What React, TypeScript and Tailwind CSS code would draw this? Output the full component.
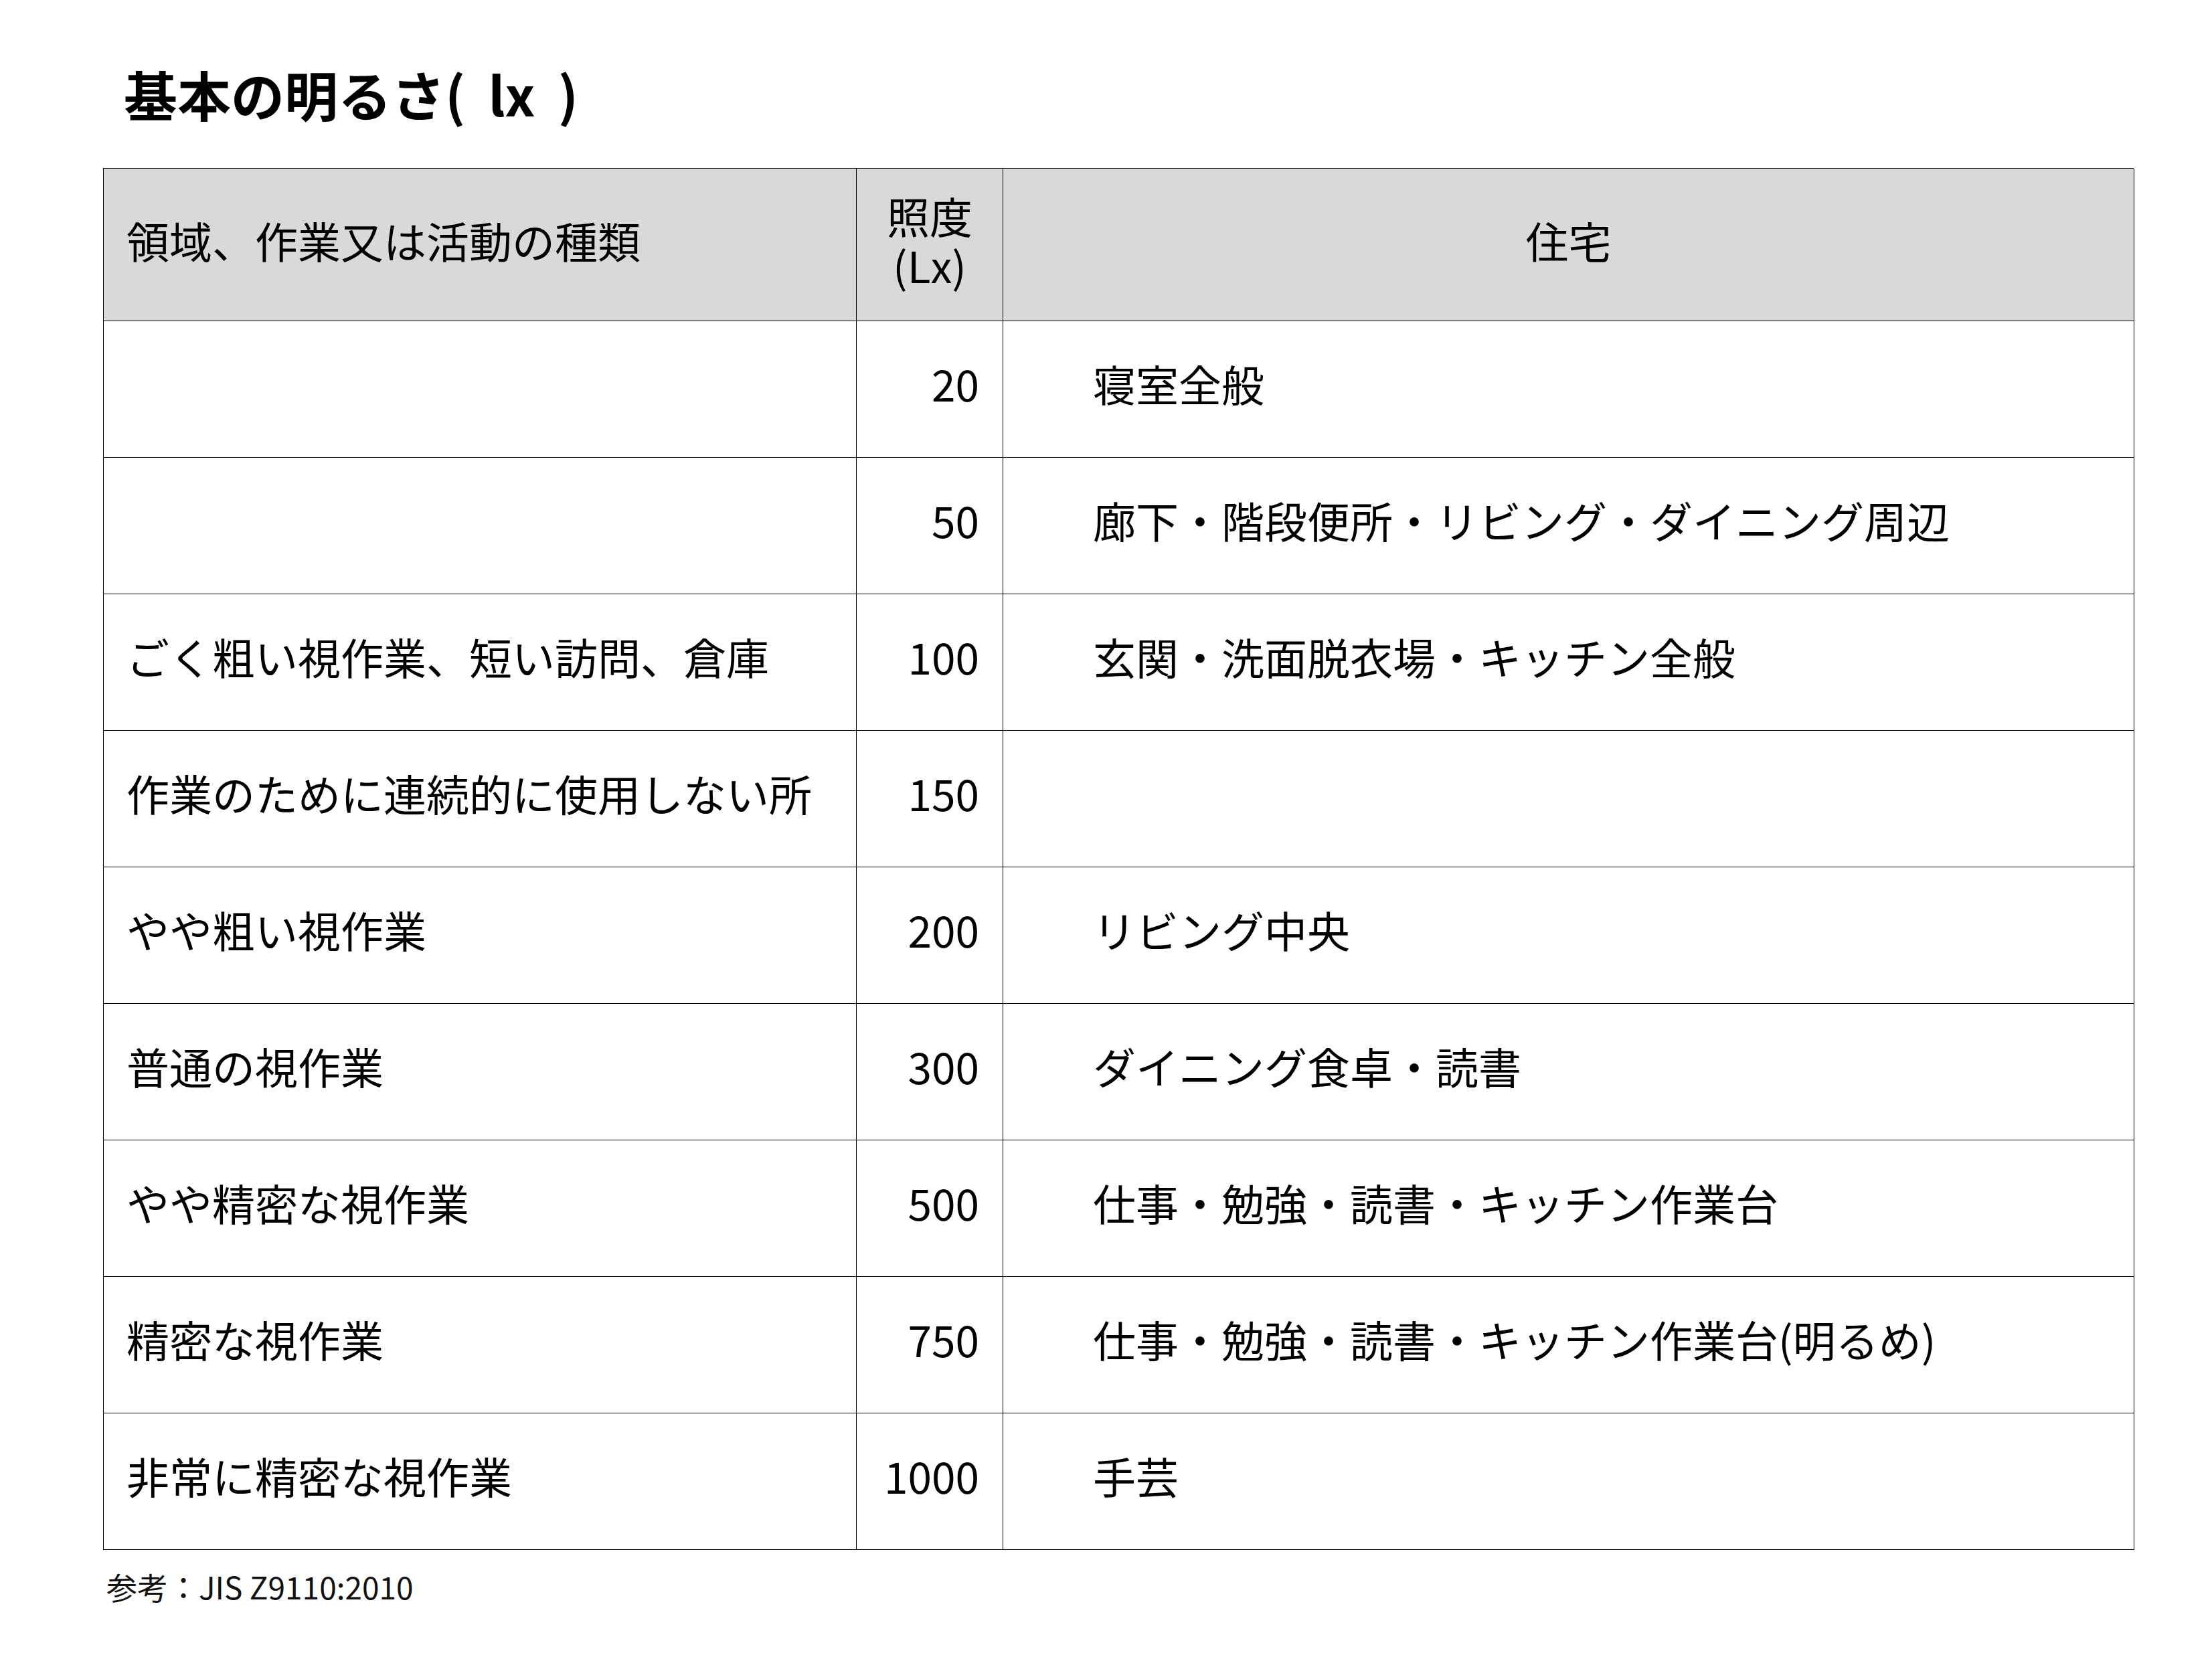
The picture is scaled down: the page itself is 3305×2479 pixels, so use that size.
import React from "react";

const rows: [string, string, string][] = [
  ["", "20", "寝室全般"],
  ["", "50", "廊下・階段便所・リビング・ダイニング周辺"],
  ["ごく粗い視作業、短い訪問、倉庫", "100", "玄関・洗面脱衣場・キッチン全般"],
  ["作業のために連続的に使用しない所", "150", ""],
  ["やや粗い視作業", "200", "リビング中央"],
  ["普通の視作業", "300", "ダイニング食卓・読書"],
  ["やや精密な視作業", "500", "仕事・勉強・読書・キッチン作業台"],
  ["精密な視作業", "750", "仕事・勉強・読書・キッチン作業台(明るめ)"],
  ["非常に精密な視作業", "1000", "手芸"],
];

export default function App() {
  return (
    <div
      className="w-[3305px] h-[2479px] bg-white text-black pt-[99px] pl-[154px]"
      style={{ fontFamily: '"Noto Sans CJK JP", "Noto Sans", sans-serif' }}
    >
      <h1 className="ml-[31px] text-[80px] leading-[80px] font-bold [word-spacing:16px]">基本の明るさ( lx )</h1>
      <div className="mt-[72px] w-[3034px] border-l border-t border-black">
        <div className="grid grid-cols-[1125px_219px_1690px] h-[228px] bg-[#d9d9d9] text-[64px]">
          <div className="flex items-center pl-[34px] pb-[16px] border-r border-b border-black">領域、作業又は活動の種類</div>
          <div className="flex flex-col items-center justify-center leading-[74px] border-r border-b border-black pb-[16px]">
            <span>照度</span>
            <span>(Lx)</span>
          </div>
          <div className="flex items-center justify-center pb-[16px] border-r border-b border-black">住宅</div>
        </div>
        {rows.map((r, i) => (
          <div key={i} className="grid grid-cols-[1125px_219px_1690px] h-[204px] text-[64px]">
            <div className="flex items-center pl-[34px] pb-[20px] border-r border-b border-black">{r[0]}</div>
            <div className="flex items-center justify-end pr-[35px] pb-[20px] border-r border-b border-black">{r[1]}</div>
            <div className="flex items-center pl-[134px] pb-[20px] border-r border-b border-black">{r[2]}</div>
          </div>
        ))}
      </div>
      <div className="mt-[31px] ml-[5px] text-[46px] leading-[46px] text-[#111]">参考：JIS Z9110:2010</div>
    </div>
  );
}
